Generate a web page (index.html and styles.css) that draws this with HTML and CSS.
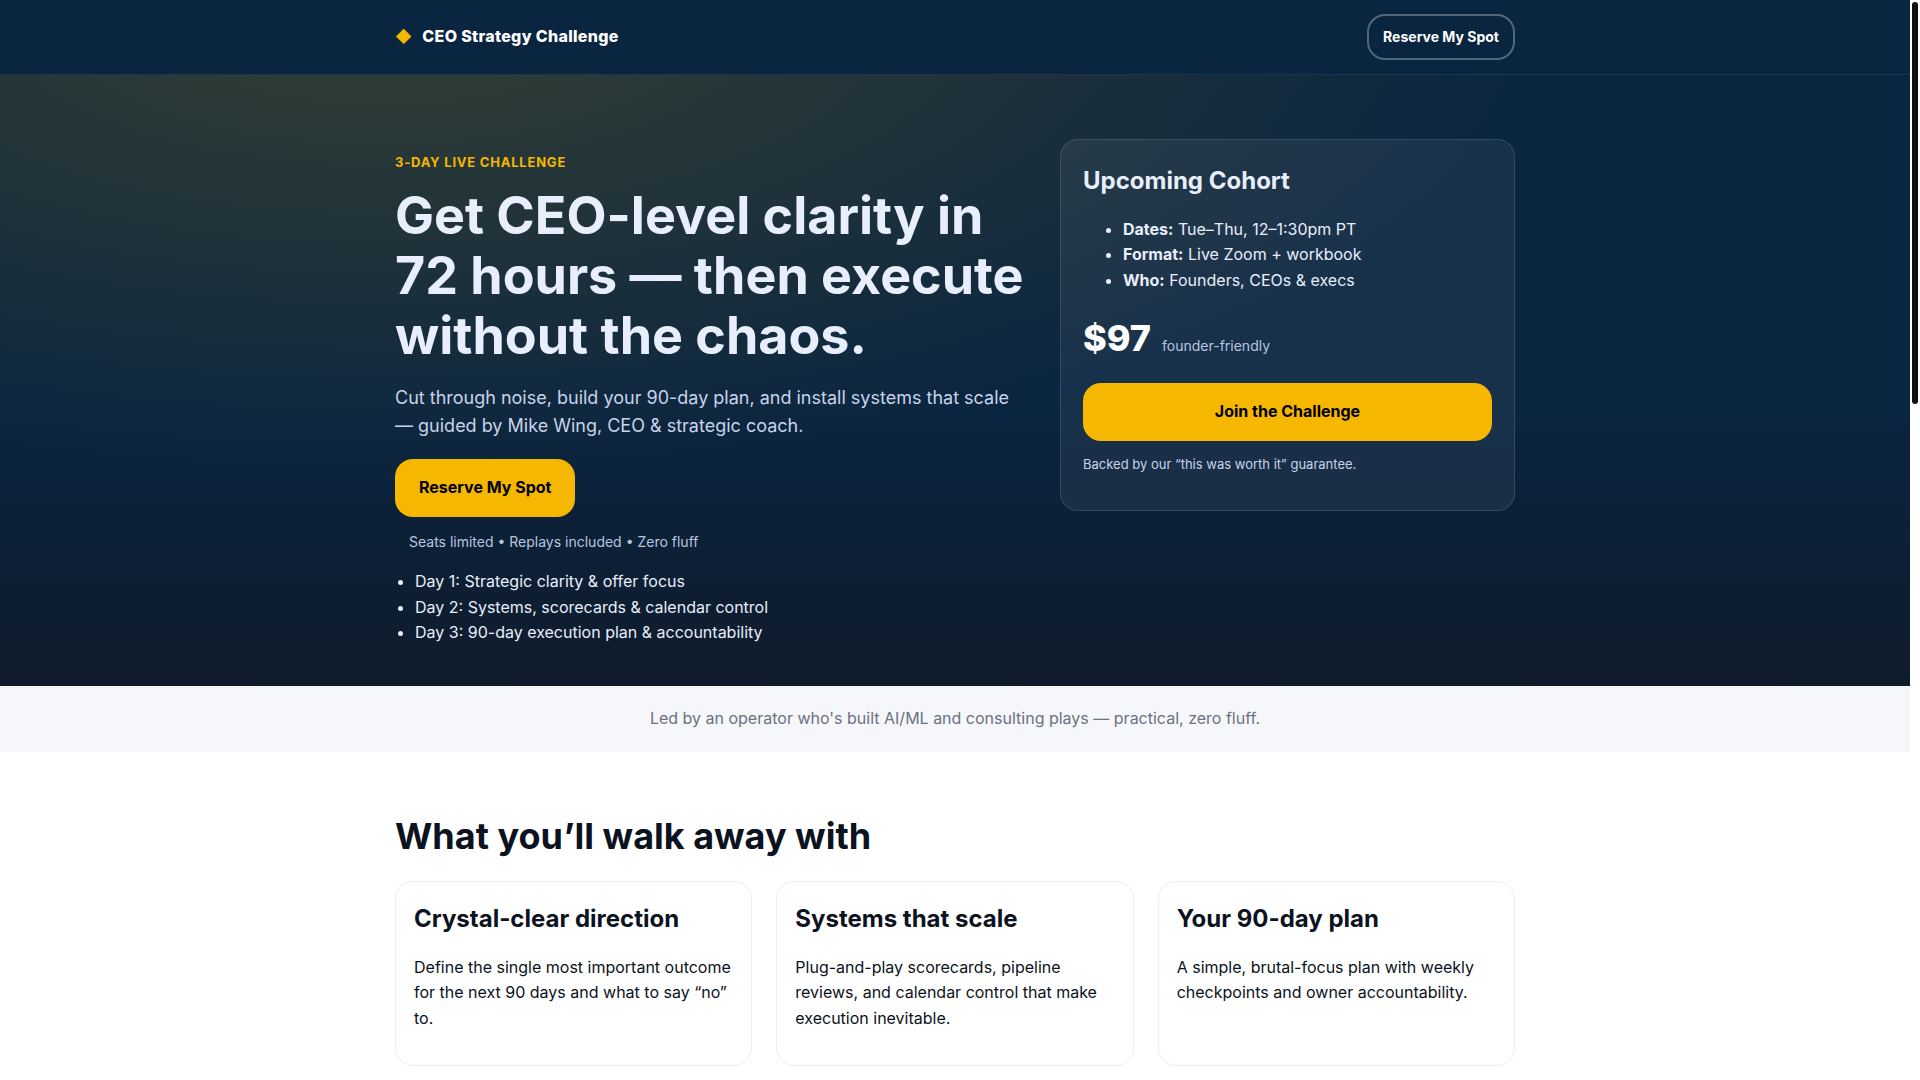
FILE: index.html
```html
<!DOCTYPE html>
<html lang="en">
<head>
<meta charset="utf-8">
<meta name="viewport" content="width=device-width, initial-scale=1">
<title>CEO Strategy Challenge</title>
<link rel="stylesheet" href="styles.css">
</head>
<body>
<div class="page">
<header class="site-header">
  <div class="container header-row">
    <a class="brand" href="#top"><span class="brand-mark">◆</span> CEO Strategy Challenge</a>
    <a class="btn btn-outline" href="#join">Reserve My Spot</a>
  </div>
</header>
<main id="top">
  <section class="hero">
    <div class="container hero-grid">
      <div class="hero-copy">
        <p class="eyebrow">3-Day Live Challenge</p>
        <h1>Get CEO-level clarity in 72 hours — then execute without the chaos.</h1>
        <p class="lead">Cut through noise, build your 90-day plan, and install systems that scale — guided by Mike Wing, CEO &amp; strategic coach.</p>
        <a class="btn btn-primary" href="#join">Reserve My Spot</a>
        <p class="note">Seats limited • Replays included • Zero fluff</p>
        <ul class="days">
          <li>Day 1: Strategic clarity &amp; offer focus</li>
          <li>Day 2: Systems, scorecards &amp; calendar control</li>
          <li>Day 3: 90-day execution plan &amp; accountability</li>
        </ul>
      </div>
      <aside class="offer" id="join">
        <h3>Upcoming Cohort</h3>
        <ul>
          <li><strong>Dates:</strong> Tue–Thu, 12–1:30pm PT</li>
          <li><strong>Format:</strong> Live Zoom + workbook</li>
          <li><strong>Who:</strong> Founders, CEOs &amp; execs</li>
        </ul>
        <p class="price"><span class="amount">$97</span><span class="price-note">founder-friendly</span></p>
        <a class="btn btn-primary btn-block" href="#checkout">Join the Challenge</a>
        <p class="guarantee">Backed by our “this was worth it” guarantee.</p>
      </aside>
    </div>
  </section>
  <section class="strip">
    <p class="container">Led by an operator who's built AI/ML and consulting plays — practical, zero fluff.</p>
  </section>
  <section class="outcomes">
    <div class="container">
      <h2>What you’ll walk away with</h2>
      <div class="cards">
        <article class="card">
          <h3>Crystal-clear direction</h3>
          <p>Define the single most important outcome for the next 90 days and what to say “no” to.</p>
        </article>
        <article class="card">
          <h3>Systems that scale</h3>
          <p>Plug-and-play scorecards, pipeline reviews, and calendar control that make execution inevitable.</p>
        </article>
        <article class="card">
          <h3>Your 90-day plan</h3>
          <p>A simple, brutal-focus plan with weekly checkpoints and owner accountability.</p>
        </article>
      </div>
    </div>
  </section>
</main>
</div>
<div class="scrollbar" aria-hidden="true"><div class="thumb"></div></div>
</body>
</html>
```
FILE: styles.css
```css
:root {
  --navy: #0a2540;
  --ink: #0b1220;
  --gold: #f5b700;
  --mist: #e8eefc;
}

* { box-sizing: border-box; }

body {
  margin: 0;
  height: 100vh;
  overflow: hidden;
  font-family: Inter, "Liberation Sans", sans-serif;
  font-size: 16px;
  line-height: 1.6;
  color: var(--ink);
  background: #fff;
}

.page {
  margin-right: 10px;
  height: 100vh;
  overflow: hidden;
}

.container {
  max-width: 1160px;
  margin: 0 auto;
  padding: 0 20px;
}

.site-header {
  background: var(--navy);
  border-bottom: 1px solid rgba(255, 255, 255, .08);
}

.header-row {
  display: flex;
  align-items: center;
  justify-content: space-between;
  padding-top: 14px;
  padding-bottom: 14px;
}

.brand {
  display: flex;
  gap: 10px;
  color: #fff;
  font-weight: 800;
  letter-spacing: .02em;
  text-decoration: none;
}

.brand-mark { color: var(--gold); }

.btn {
  display: inline-block;
  border-radius: 18px;
  padding: 16px 24px;
  font-weight: 700;
  text-align: center;
  text-decoration: none;
}

.btn-primary { background: var(--gold); color: #000; }

.btn-outline {
  padding: 10px 14px;
  border: 2px solid rgba(255, 255, 255, .3);
  color: #fff;
  font-size: 14px;
}

.btn-block { display: block; }

.hero {
  padding: 64px 0 40px;
  color: var(--mist);
  background:
    radial-gradient(1180px 460px at 20% -10%, rgba(245, 183, 0, .18), transparent),
    linear-gradient(180deg, var(--navy) 55%, #0f1b2b 100%);
}

.hero-grid {
  display: grid;
  grid-template-columns: 1.4fr 1fr;
  gap: 28px;
  align-items: start;
}

.eyebrow {
  margin: 13px 0;
  color: var(--gold);
  font-size: 13px;
  font-weight: 700;
  letter-spacing: .06em;
  text-transform: uppercase;
}

h1 {
  margin: 0 0 18px;
  font-size: 52px;
  line-height: 60px;
}

.lead {
  margin: 0 0 19px;
  color: #c8d3ea;
  font-size: 18px;
  line-height: 28px;
}

.note {
  margin: 14px 0 14px 14px;
  color: #b8c4e0;
  font-size: 14px;
}

.days {
  margin: 16px 0 0;
  padding-left: 20px;
}

.offer {
  padding: 22px;
  border: 1px solid rgba(255, 255, 255, .12);
  border-radius: 18px;
  background: rgba(255, 255, 255, .06);
}

.offer h3, .card h3 {
  margin: 0;
  font-size: 24px;
}

.offer ul { margin: 16px 0; }

.price {
  display: flex;
  align-items: baseline;
  gap: 11px;
  margin: 16px 0;
}

.amount {
  color: #fff;
  font-size: 36px;
  font-weight: 800;
}

.price-note { color: #b8c4e0; font-size: 14px; }

.guarantee {
  margin: 13px 0;
  color: #c8d3ea;
  font-size: 13px;
}

.strip {
  padding: 20px 0;
  background: #f5f7fb;
  color: #6b7280;
  text-align: center;
}

.strip p { margin: 0 auto; }

.outcomes { padding: 56px 0; }

h2 {
  margin: 0 0 16px;
  font-size: 36px;
}

.cards {
  display: grid;
  grid-template-columns: repeat(3, 1fr);
  gap: 24px;
}

.card {
  padding: 18px;
  border: 1px solid #e8eefc;
  border-radius: 18px;
}

.card p { margin: 16px 0; }

/* Slim page scrollbar */
.scrollbar {
  position: fixed;
  top: 0;
  right: 0;
  bottom: 0;
  width: 10px;
  padding: 2px;
  background: #fff;
}

.thumb {
  height: 402px;
  border-radius: 3px;
  background: #111;
}
```
